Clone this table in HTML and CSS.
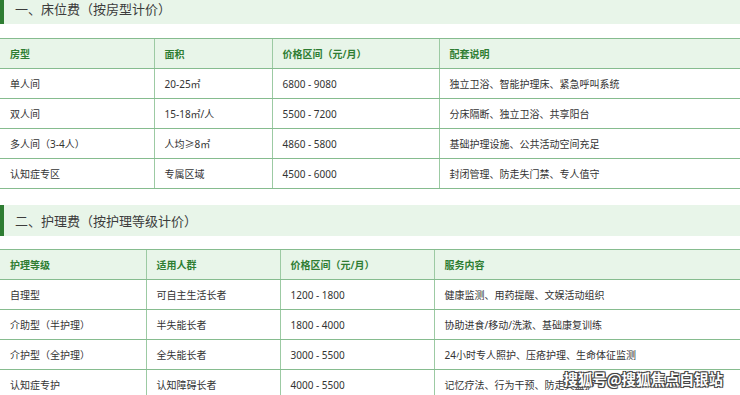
FILE: index.html
```html
<!DOCTYPE html>
<html lang="zh">
<head>
<meta charset="utf-8">
<link rel="stylesheet" href="styles.css">
</head>
<body>
<div class="page">
  <h2 class="sec sec-first">一、床位费（按房型计价）</h2>
  <table class="tbl">
    <colgroup><col style="width:154px"><col style="width:118px"><col style="width:167px"><col></colgroup>
    <thead>
      <tr><th>房型</th><th>面积</th><th>价格区间（元/月）</th><th>配套说明</th></tr>
    </thead>
    <tbody>
      <tr><td>单人间</td><td>20-25㎡</td><td>6800 - 9080</td><td>独立卫浴、智能护理床、紧急呼叫系统</td></tr>
      <tr><td>双人间</td><td>15-18㎡/人</td><td>5500 - 7200</td><td>分床隔断、独立卫浴、共享阳台</td></tr>
      <tr><td>多人间（3-4人）</td><td>人均≥8㎡</td><td>4860 - 5800</td><td>基础护理设施、公共活动空间充足</td></tr>
      <tr><td>认知症专区</td><td>专属区域</td><td>4500 - 6000</td><td>封闭管理、防走失门禁、专人值守</td></tr>
    </tbody>
  </table>

  <h2 class="sec">二、护理费（按护理等级计价）</h2>
  <table class="tbl">
    <colgroup><col style="width:146px"><col style="width:134px"><col style="width:154px"><col></colgroup>
    <thead>
      <tr><th>护理等级</th><th>适用人群</th><th>价格区间（元/月）</th><th>服务内容</th></tr>
    </thead>
    <tbody>
      <tr><td>自理型</td><td>可自主生活长者</td><td>1200 - 1800</td><td>健康监测、用药提醒、文娱活动组织</td></tr>
      <tr><td>介助型（半护理）</td><td>半失能长者</td><td>1800 - 4000</td><td>协助进食/移动/洗漱、基础康复训练</td></tr>
      <tr><td>介护型（全护理）</td><td>全失能长者</td><td>3000 - 5500</td><td>24小时专人照护、压疮护理、生命体征监测</td></tr>
      <tr><td>认知症专护</td><td>认知障碍长者</td><td>4000 - 5500</td><td>记忆疗法、行为干预、防走失监护</td></tr>
    </tbody>
  </table>
</div>
<div class="watermark">搜狐号@搜狐焦点白银站</div>
</body>
</html>
```

FILE: styles.css
```css
html, body {
  margin: 0;
  padding: 0;
  background: #ffffff;
  overflow: hidden;
}
body {
  width: 740px;
  height: 395px;
  position: relative;
  font-family: "Noto Sans", "Noto Sans CJK SC", sans-serif;
  color: #333333;
}
.page {
  display: flex;
  flex-direction: column;
}
.sec {
  margin: 16px 0 13px 0;
  height: 31px;
  box-sizing: border-box;
  background: #e8f5e9;
  border-left: 4px solid #2e7d32;
  padding-left: 11px;
  display: flex;
  align-items: center;
  font-size: 13px;
  font-weight: normal;
  color: #3c3c3c;
}
.sec-first {
  margin-top: -7px;
  margin-bottom: 14px;
}
.tbl {
  width: 740px;
  border-collapse: collapse;
  table-layout: fixed;
  font-size: 10px;
}
.tbl th, .tbl td {
  height: 29px;
  padding: 0 10px;
  text-align: left;
  vertical-align: middle;
  border-top: 1px solid #86bc8f;
  border-bottom: 1px solid #86bc8f;
  border-left: 1px solid #9ccaa3;
  white-space: nowrap;
  overflow: hidden;
}
.tbl th:first-child, .tbl td:first-child {
  border-left: none;
}
.tbl th {
  background: #e8f5e9;
  color: #2e7d32;
  font-weight: 600;
}
.tbl td {
  color: #333333;
}
.watermark {
  position: absolute;
  right: 17px;
  bottom: 6px;
  font-family: "Noto Sans CJK SC", sans-serif;
  font-size: 14.5px;
  font-weight: bold;
  color: #ffffff;
  text-shadow: -1px -1px 0 #444, 1px -1px 0 #444, -1px 1px 0 #444, 1px 1px 0 #444, 0 0 2px #333;
}
```
